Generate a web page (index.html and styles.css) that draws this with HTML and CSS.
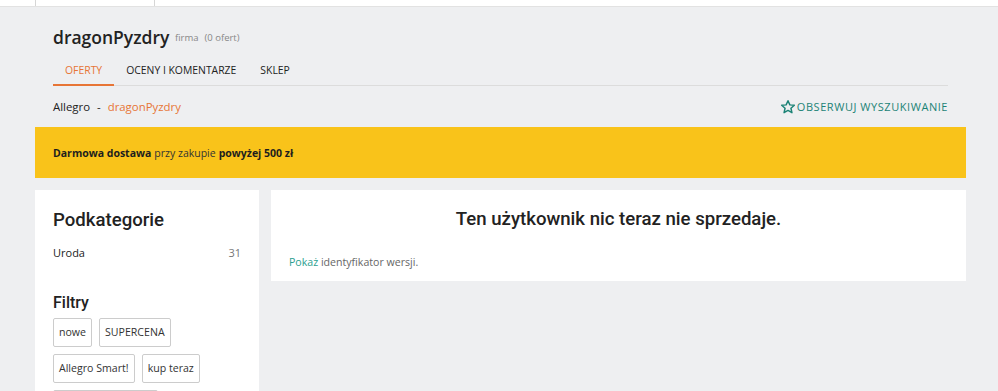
FILE: index.html
```html
<!DOCTYPE html>
<html lang="pl">
<head>
    <meta charset="UTF-8">
    <meta name="viewport" content="width=device-width, initial-scale=1.0">
    <title>dragonPyzdry - Allegro</title>
    <link rel="stylesheet" href="styles.css">
</head>
<body>
    <div class="topbar">
        <div class="topbar-cell"></div>
    </div>
    <div class="page">
        <div class="seller-header">
            <h1 class="seller-name">dragonPyzdry <span class="seller-type">firma</span><span class="seller-count">(0 ofert)</span></h1>
            <ul class="tabs">
                <li class="tab active">OFERTY</li>
                <li class="tab">OCENY I KOMENTARZE</li>
                <li class="tab">SKLEP</li>
            </ul>
            <div class="crumbs-row">
                <div class="crumbs">Allegro <span class="sep">-</span> <a href="#">dragonPyzdry</a></div>
                <a class="watch" href="#">
                    <svg width="16" height="16" viewBox="0 0 24 24"><path d="M12 2.6l2.8 6.2 6.7.6-5.1 4.5 1.5 6.6L12 17.1l-5.9 3.4 1.5-6.6-5.1-4.5 6.7-.6z" fill="none" stroke="#1c8376" stroke-width="2.2" stroke-linejoin="round"/></svg>
                    OBSERWUJ WYSZUKIWANIE
                </a>
            </div>
        </div>
        <div class="banner"><b>Darmowa dostawa</b> przy zakupie <b>powyżej 500 zł</b></div>
        <div class="main">
            <aside class="sidebar">
                <h2 class="side-title">Podkategorie</h2>
                <div class="cat-row"><span>Uroda</span><span class="cat-count">31</span></div>
                <h3 class="filter-title">Filtry</h3>
                <div class="chips">
                    <span class="chip">nowe</span>
                    <span class="chip">SUPERCENA</span>
                    <span class="chip">Allegro Smart!</span>
                    <span class="chip">kup teraz</span>
                    <span class="chip">Darmowa dostawa</span>
                </div>
            </aside>
            <section class="content">
                <h2 class="empty-title">Ten użytkownik nic teraz nie sprzedaje.</h2>
                <p class="version"><a href="#">Pokaż</a> identyfikator wersji.</p>
            </section>
        </div>
    </div>
</body>
</html>
```

FILE: styles.css
```css
body {
    margin: 0;
    background: #eeeff1;
    font-family: "Open Sans", Arial, sans-serif;
    color: #222;
    overflow: hidden;
}
a {
    text-decoration: none;
}
.topbar {
    height: 6px;
    background: #fff;
    border-bottom: 1px solid #e2e2e2;
    padding-left: 35px;
}
.topbar-cell {
    width: 118px;
    height: 6px;
    border-left: 1px solid #d6d6d6;
    border-right: 1px solid #d6d6d6;
}
.page {
    width: 931px;
    margin-left: 35px;
}
.seller-header {
    padding: 0 18px;
}
.seller-name {
    margin: 0;
    padding-top: 18px;
    font-size: 17.5px;
    font-weight: 600;
    line-height: 24px;
    color: #222;
}
.seller-type, .seller-count {
    font-size: 9.5px;
    font-weight: 400;
    color: #888;
    vertical-align: 3px;
}
.seller-type {
    margin-left: 1px;
    margin-right: 6px;
}
.tabs {
    display: flex;
    list-style: none;
    margin: 7px 0 0;
    padding: 0;
    border-bottom: 1px solid #dcdcdc;
}
.tab {
    font-size: 10.4px;
    line-height: 14px;
    padding: 6px 12px;
    color: #222;
}
.tab.active {
    color: #e77536;
    border-bottom: 2px solid #e77536;
    margin-bottom: -1px;
}
.tab + .tab {
    padding-bottom: 8px;
}
.crumbs-row {
    display: flex;
    justify-content: space-between;
    align-items: center;
    height: 41px;
}
.crumbs {
    font-size: 11.4px;
}
.crumbs .sep {
    margin: 0 4px;
}
.crumbs a {
    color: #e77536;
}
.watch {
    display: flex;
    align-items: center;
    gap: 1px;
    color: #1c8376;
    font-size: 11px;
    letter-spacing: 0.55px;
}
.banner {
    background: #f9c31a;
    height: 51px;
    padding: 0 18px;
    display: flex;
    align-items: center;
    font-size: 10.5px;
    color: #333;
}
.banner b {
    color: #1e1e1e;
    margin: 0 3px 0 0;
}
.banner b + b {
    margin: 0 0 0 3px;
}
.main {
    display: flex;
    align-items: flex-start;
    gap: 12px;
    margin-top: 12px;
}
.sidebar {
    width: 188px;
    padding: 18px 18px 0;
    background: #fff;
    height: 200px;
}
.side-title {
    margin: 0;
    font-family: Roboto, Arial, sans-serif;
    font-size: 18.6px;
    font-weight: 500;
    line-height: 24px;
    color: #222;
}
.cat-row {
    display: flex;
    justify-content: space-between;
    margin-top: 13px;
    font-size: 11px;
    line-height: 16px;
}
.cat-count {
    color: #777;
}
.filter-title {
    margin: 32px 0 0;
    font-family: Roboto, Arial, sans-serif;
    font-size: 16px;
    font-weight: 500;
    line-height: 20px;
    color: #222;
}
.chips {
    display: flex;
    flex-wrap: wrap;
    gap: 7px 7px;
    margin-top: 5px;
}
.chip {
    border: 1px solid #ccc;
    border-radius: 2px;
    padding: 0 5px;
    height: 27px;
    line-height: 27px;
    font-size: 10.6px;
    color: #333;
}
.content {
    flex: 1;
    background: #fff;
    padding: 16px 18px 11px;
}
.empty-title {
    margin: 0;
    text-align: center;
    font-family: Roboto, Arial, sans-serif;
    font-size: 18.6px;
    font-weight: 500;
    line-height: 26px;
    color: #222;
}
.version {
    margin: 22px 0 0;
    font-size: 10.6px;
    line-height: 16px;
    color: #666;
}
.version a {
    color: #2ba090;
}
```
